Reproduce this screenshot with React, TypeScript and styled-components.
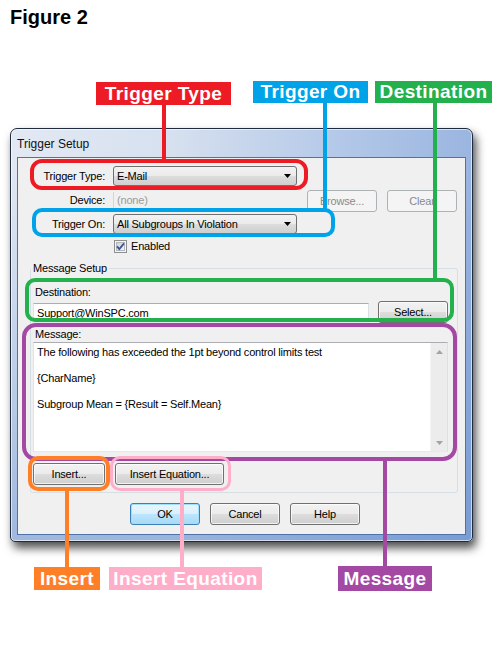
import React from "react";
import styled, { createGlobalStyle } from "styled-components";

const Global = createGlobalStyle`
  html, body { margin: 0; padding: 0; background: #ffffff; }
  body { font-family: "Liberation Sans", Arial, sans-serif; }
  * { box-sizing: border-box; }
`;

const Page = styled.div`
  position: relative;
  width: 497px;
  height: 650px;
  background: #ffffff;
  overflow: hidden;
`;

const Header = styled.header`
  height: 128px;
  padding: 6px 0 0 10px;
`;

const FigureTitle = styled.h1`
  margin: 0;
  font: bold 20px/22px "Liberation Sans", Arial, sans-serif;
  color: #000;
`;

const Window = styled.div`
  margin-left: 10px;
  width: 463px;
  height: 414px;
  border: 1px solid #1f2c40;
  border-radius: 7px 7px 5px 5px;
  background:
    linear-gradient(to bottom, rgba(255, 255, 255, 0) 0px, rgba(255, 255, 255, 0) 26px, rgba(80, 125, 195, 0.45) 100%),
    linear-gradient(to right, #e3e9f3 0%, #d6e0ef 35%, #b3c8e8 72%, #9ab5e0 100%);
  box-shadow: 3px 6px 10px rgba(0, 0, 0, 0.7), inset 0 0 0 1px rgba(255, 255, 255, 0.6);
  padding: 0 6px 6px 6px;
  display: flex;
  flex-direction: column;
`;

const TitleBar = styled.div`
  height: 28px;
  display: flex;
  align-items: center;
  padding-top: 1px;
  font: 12px "Liberation Sans", Arial, sans-serif;
  color: #111;
`;

const Client = styled.div`
  flex: 1;
  background: #f0f0f0;
  border: 1px solid #4f72a8;
  font: 11px/13px "Liberation Sans", Arial, sans-serif;
  letter-spacing: -0.2px;
  color: #000;
  padding: 8px 0 9px 0;
  display: flex;
  flex-direction: column;
`;

const TopGrid = styled.div`
  display: grid;
  grid-template-columns: 85px 184px 70px 70px;
  grid-template-rows: 20px 24px 20px 20px;
  column-gap: 10px;
  row-gap: 2px;
  align-items: center;
`;

const FieldLabel = styled.span`
  grid-column: 1;
  justify-self: end;
  margin-right: -2px;
  white-space: nowrap;
`;

const Combo = styled.div`
  grid-column: 2;
  height: 20px;
  border: 1px solid #707070;
  border-radius: 3px;
  background: linear-gradient(#f2f2f2 0%, #ebebeb 50%, #dddddd 50%, #cfcfcf 100%);
  display: flex;
  align-items: center;
  justify-content: space-between;
  padding: 0 5px 0 3px;
  white-space: nowrap;
`;

const ReadOnlyField = styled.div`
  grid-column: 2;
  height: 17px;
  border-left: 1px solid #d6d6d6;
  color: #9a9a9a;
  padding-left: 3px;
  display: flex;
  align-items: center;
`;

const Button = styled.button<{ $w: number; $variant?: "default" | "disabled" }>`
  width: ${(p) => p.$w}px;
  height: 22px;
  padding: 0;
  font: 11px "Liberation Sans", Arial, sans-serif;
  letter-spacing: -0.2px;
  border-radius: 3px;
  align-self: end;
  border: 1px solid
    ${(p) => (p.$variant === "default" ? "#3c7fb1" : p.$variant === "disabled" ? "#adb2b5" : "#707070")};
  color: ${(p) => (p.$variant === "disabled" ? "#8a8a8a" : "#000")};
  background: ${(p) =>
    p.$variant === "default"
      ? "linear-gradient(#eaf6fd 0%, #d9f0fc 50%, #bee6fd 50%, #a7d9f5 100%)"
      : p.$variant === "disabled"
      ? "#f4f4f4"
      : "linear-gradient(#f2f2f2 0%, #ebebeb 50%, #dddddd 50%, #cfcfcf 100%)"};
  box-shadow: ${(p) =>
    p.$variant === "default"
      ? "inset 0 0 0 1px #9fe0ff"
      : p.$variant === "disabled"
      ? "none"
      : "inset 0 0 0 1px rgba(255,255,255,0.7)"};
`;

const CheckRow = styled.div`
  grid-column: 2;
  display: flex;
  align-items: center;
  gap: 4px;
  padding-left: 1px;
`;

const Group = styled.fieldset`
  margin: 6px 0 0 12px;
  width: 428px;
  min-width: 0;
  border: 1px solid #d5dfe5;
  border-radius: 3px;
  padding: 11px 9px 7px 2px;
  display: flex;
  flex-direction: column;
`;

const GroupLegend = styled.legend`
  padding: 0 2px;
  margin-left: -2px;
  line-height: 13px;
`;

const SmallLabel = styled.div<{ $mt?: number }>`
  margin-top: ${(p) => p.$mt ?? 0}px;
  padding-left: 2px;
  line-height: 13px;
`;

const DestRow = styled.div`
  margin-top: 4px;
  display: flex;
  gap: 9px;
  height: 20px;
`;

const TextBox = styled.div`
  width: 336px;
  height: 20px;
  background: #fff;
  border: 1px solid;
  border-color: #abadb3 #dbdfe6 #e3e9ef #e2e3ea;
  display: flex;
  align-items: center;
  padding-left: 3px;
`;

const MessageBox = styled.div`
  margin-top: 1px;
  height: 110px;
  background: #fff;
  border: 1px solid;
  border-color: #abadb3 #dbdfe6 #e3e9ef #e2e3ea;
  display: flex;
`;

const MessageText = styled.div`
  flex: 1;
  padding: 3px 3px;
  line-height: 13px;
  white-space: pre-wrap;
`;

const ScrollBar = styled.div`
  width: 17px;
  background: #ececec;
  border-left: 1px solid #f4f4f4;
  display: flex;
  flex-direction: column;
  justify-content: space-between;
`;

const ScrollArrow = styled.div`
  height: 17px;
  display: flex;
  align-items: center;
  justify-content: center;
`;

const ButtonRow = styled.div<{ $mt: number; $pl?: number }>`
  margin-top: ${(p) => p.$mt}px;
  padding-left: ${(p) => p.$pl ?? 0}px;
  display: flex;
  gap: 10px;
`;

/* ---------- annotation overlay ---------- */

const Overlay = styled.div`
  position: absolute;
  inset: 0;
  pointer-events: none;
`;

const Callout = styled.div<{ $c: string; $x: number; $y: number; $w: number; $h: number }>`
  position: absolute;
  left: ${(p) => p.$x}px;
  top: ${(p) => p.$y}px;
  width: ${(p) => p.$w}px;
  height: ${(p) => p.$h}px;
  background: ${(p) => p.$c};
  color: #fff;
  font: bold 19px/${(p) => p.$h}px "Liberation Sans", Arial, sans-serif;
  letter-spacing: 0.4px;
  text-align: center;
  white-space: nowrap;
`;

const Leader = styled.div<{ $c: string; $x: number; $y: number; $h: number }>`
  position: absolute;
  left: ${(p) => p.$x}px;
  top: ${(p) => p.$y}px;
  width: 4px;
  height: ${(p) => p.$h}px;
  background: ${(p) => p.$c};
`;

const Ring = styled.div<{ $c: string; $x: number; $y: number; $w: number; $h: number; $t: number; $r: number }>`
  position: absolute;
  left: ${(p) => p.$x}px;
  top: ${(p) => p.$y}px;
  width: ${(p) => p.$w}px;
  height: ${(p) => p.$h}px;
  border: ${(p) => p.$t}px solid ${(p) => p.$c};
  border-radius: ${(p) => p.$r}px;
`;

const RED = "#ed1c24";
const BLUE = "#00a2e8";
const GREEN = "#22b14c";
const ORANGE = "#ff7f27";
const PINK = "#ffaec9";
const PURPLE = "#a349a4";

const callouts = [
  { label: "Trigger Type", c: RED, x: 96, y: 82, w: 135, h: 23 },
  { label: "Trigger On", c: BLUE, x: 253, y: 81, w: 115, h: 22 },
  { label: "Destination", c: GREEN, x: 375, y: 81, w: 117, h: 22 },
  { label: "Insert", c: ORANGE, x: 34, y: 567, w: 66, h: 23 },
  { label: "Insert Equation", c: PINK, x: 109, y: 567, w: 153, h: 23 },
  { label: "Message", c: PURPLE, x: 338, y: 566, w: 94, h: 25 },
];

const leaders = [
  { c: RED, x: 162, y: 105, h: 55 },
  { c: BLUE, x: 323, y: 103, h: 106 },
  { c: GREEN, x: 433, y: 103, h: 176 },
  { c: PURPLE, x: 383, y: 459, h: 107 },
  { c: ORANGE, x: 65, y: 490, h: 77 },
  { c: PINK, x: 180, y: 490, h: 77 },
];

const rings = [
  { c: RED, x: 30, y: 159, w: 278, h: 31, t: 4, r: 12 },
  { c: BLUE, x: 32, y: 208, w: 303, h: 29, t: 4, r: 10 },
  { c: GREEN, x: 25, y: 278, w: 429, h: 44, t: 4, r: 10 },
  { c: PURPLE, x: 22, y: 323, w: 435, h: 138, t: 4, r: 14 },
  { c: ORANGE, x: 28, y: 456, w: 82, h: 35, t: 4, r: 10 },
  { c: PINK, x: 110, y: 456, w: 121, h: 35, t: 3, r: 10 },
];

const DropArrow = () => (
  <svg width="7" height="4" viewBox="0 0 7 4">
    <polygon points="0,0 7,0 3.5,4" fill="#000" />
  </svg>
);

const CheckBox = () => (
  <svg width="13" height="13" viewBox="0 0 13 13">
    <defs>
      <linearGradient id="cbg" x1="0" y1="0" x2="1" y2="1">
        <stop offset="0" stopColor="#cbcfd5" />
        <stop offset="1" stopColor="#f7f7f7" />
      </linearGradient>
    </defs>
    <rect x="0.5" y="0.5" width="12" height="12" fill="#f4f4f4" stroke="#8e8f8f" />
    <rect x="2.5" y="2.5" width="8" height="8" fill="url(#cbg)" stroke="#b5b9bf" />
    <path d="M3 6.3 L5.3 9 L10 3.4" fill="none" stroke="#3b5493" strokeWidth="1.8" />
  </svg>
);

const ScrollTri = ({ up }: { up?: boolean }) => (
  <svg width="7" height="4" viewBox="0 0 7 4">
    <polygon points={up ? "0,4 7,4 3.5,0" : "0,0 7,0 3.5,4"} fill="#a3a3a3" />
  </svg>
);

export default function App() {
  return (
    <Page>
      <Global />
      <Header>
        <FigureTitle>Figure 2</FigureTitle>
      </Header>

      <Window>
        <TitleBar>Trigger Setup</TitleBar>
        <Client>
          <TopGrid>
            <FieldLabel>Trigger Type:</FieldLabel>
            <Combo>
              <span>E-Mail</span>
              <DropArrow />
            </Combo>

            <FieldLabel>Device:</FieldLabel>
            <ReadOnlyField>(none)</ReadOnlyField>
            <Button $w={70} $variant="disabled">Browse...</Button>
            <Button $w={70} $variant="disabled">Clear</Button>

            <FieldLabel>Trigger On:</FieldLabel>
            <Combo>
              <span>All Subgroups In Violation</span>
              <DropArrow />
            </Combo>

            <CheckRow>
              <CheckBox />
              <span>Enabled</span>
            </CheckRow>
          </TopGrid>

          <Group>
            <GroupLegend>Message Setup</GroupLegend>
            <SmallLabel>Destination:</SmallLabel>
            <DestRow>
              <TextBox>Support@WinSPC.com</TextBox>
              <Button $w={70}>Select...</Button>
            </DestRow>
            <SmallLabel $mt={5}>Message:</SmallLabel>
            <MessageBox>
              <MessageText>
                {"The following has exceeded the 1pt beyond control limits test\n\n{CharName}\n\nSubgroup Mean = {Result = Self.Mean}"}
              </MessageText>
              <ScrollBar>
                <ScrollArrow>
                  <ScrollTri up />
                </ScrollArrow>
                <ScrollArrow>
                  <ScrollTri />
                </ScrollArrow>
              </ScrollBar>
            </MessageBox>
            <ButtonRow $mt={11}>
              <Button $w={72}>Insert...</Button>
              <Button $w={109}>Insert Equation...</Button>
            </ButtonRow>
          </Group>

          <ButtonRow $mt={10} $pl={112}>
            <Button $w={70} $variant="default">OK</Button>
            <Button $w={70}>Cancel</Button>
            <Button $w={70}>Help</Button>
          </ButtonRow>
        </Client>
      </Window>

      <Overlay>
        {rings.map((r, i) => (
          <Ring key={i} $c={r.c} $x={r.x} $y={r.y} $w={r.w} $h={r.h} $t={r.t} $r={r.r} />
        ))}
        {leaders.map((l, i) => (
          <Leader key={i} $c={l.c} $x={l.x} $y={l.y} $h={l.h} />
        ))}
        {callouts.map((c) => (
          <Callout key={c.label} $c={c.c} $x={c.x} $y={c.y} $w={c.w} $h={c.h}>
            {c.label}
          </Callout>
        ))}
      </Overlay>
    </Page>
  );
}
